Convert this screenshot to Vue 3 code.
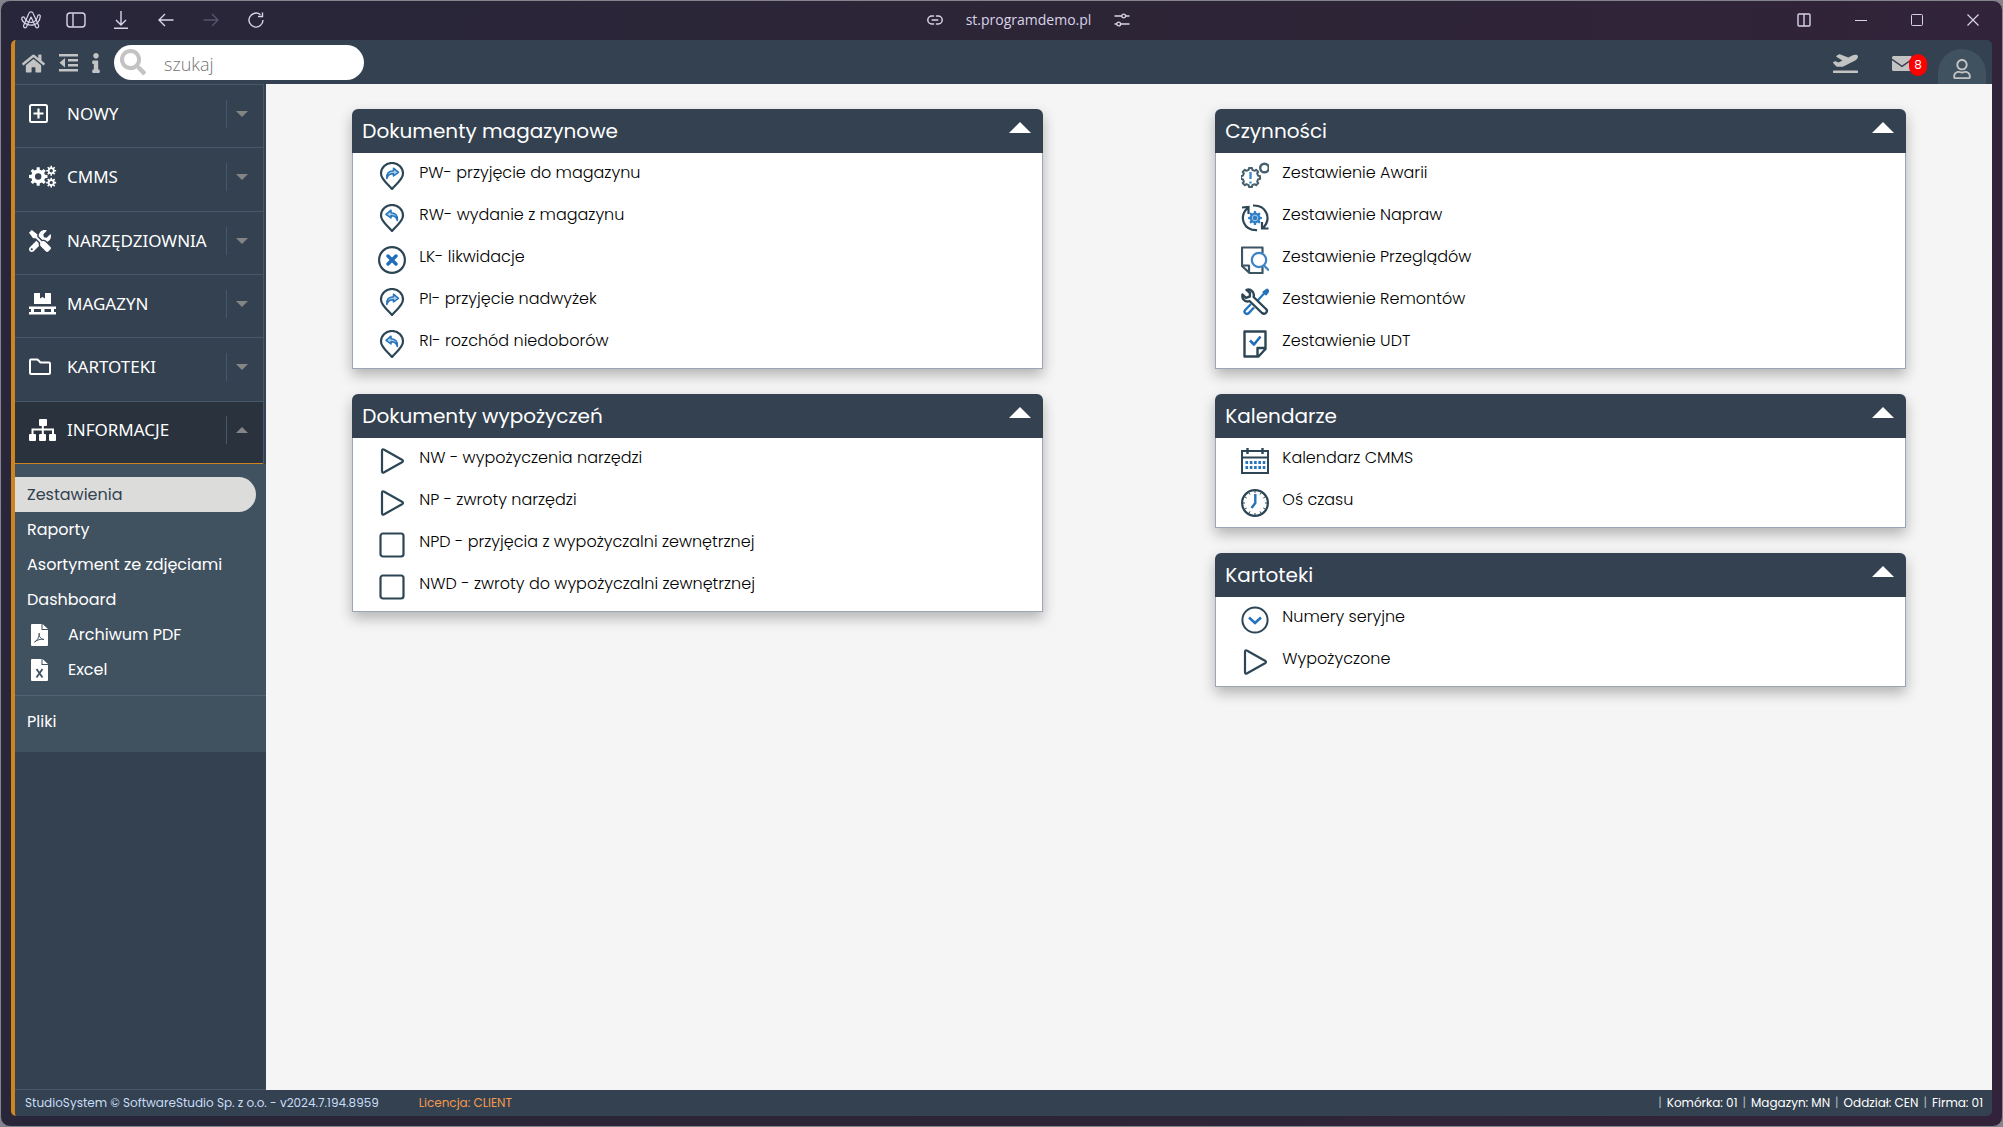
<script setup>
import { ref } from 'vue'

// Outline of a toothed wheel centred on (cx, cy).
function gear(cx, cy, inner, outer, teeth) {
  const points = []
  const step = (Math.PI * 2) / teeth
  for (let i = 0; i < teeth; i++) {
    const a = i * step
    for (const [r, k] of [[inner, -0.3], [outer, -0.2], [outer, 0.2], [inner, 0.3]]) {
      points.push(`${(cx + r * Math.cos(a + k * step)).toFixed(2)} ${(cy + r * Math.sin(a + k * step)).toFixed(2)}`)
    }
  }
  return `M${points.join('L')}Z`
}

const search = ref('')

const menu = [
  { label: 'NOWY', icon: 'plus-square' },
  { label: 'CMMS', icon: 'cogs' },
  { label: 'NARZĘDZIOWNIA', icon: 'tools' },
  { label: 'MAGAZYN', icon: 'pallet' },
  { label: 'KARTOTEKI', icon: 'folder' },
  { label: 'INFORMACJE', icon: 'sitemap', open: true },
]

const submenu = [
  { label: 'Zestawienia', active: true },
  { label: 'Raporty' },
  { label: 'Asortyment ze zdjęciami' },
  { label: 'Dashboard' },
  { label: 'Archiwum PDF', icon: 'file-pdf' },
  { label: 'Excel', icon: 'file-excel' },
]

const columns = [
  [
    {
      title: 'Dokumenty magazynowe',
      items: [
        { label: 'PW- przyjęcie do magazynu', icon: 'pin-in' },
        { label: 'RW- wydanie z magazynu', icon: 'pin-out' },
        { label: 'LK- likwidacje', icon: 'cross' },
        { label: 'PI- przyjęcie nadwyżek', icon: 'pin-in' },
        { label: 'RI- rozchód niedoborów', icon: 'pin-out' },
      ],
    },
    {
      title: 'Dokumenty wypożyczeń',
      items: [
        { label: 'NW - wypożyczenia narzędzi', icon: 'play' },
        { label: 'NP - zwroty narzędzi', icon: 'play' },
        { label: 'NPD - przyjęcia z wypożyczalni zewnętrznej', icon: 'square' },
        { label: 'NWD - zwroty do wypożyczalni zewnętrznej', icon: 'square' },
      ],
    },
  ],
  [
    {
      title: 'Czynności',
      items: [
        { label: 'Zestawienie Awarii', icon: 'failure' },
        { label: 'Zestawienie Napraw', icon: 'repair' },
        { label: 'Zestawienie Przeglądów', icon: 'review' },
        { label: 'Zestawienie Remontów', icon: 'overhaul' },
        { label: 'Zestawienie UDT', icon: 'report' },
      ],
    },
    {
      title: 'Kalendarze',
      items: [
        { label: 'Kalendarz CMMS', icon: 'calendar' },
        { label: 'Oś czasu', icon: 'clock' },
      ],
    },
    {
      title: 'Kartoteki',
      items: [
        { label: 'Numery seryjne', icon: 'chevron' },
        { label: 'Wypożyczone', icon: 'play' },
      ],
    },
  ],
]

const context = ['Komórka: 01', 'Magazyn: MN', 'Oddział: CEN', 'Firma: 01']
</script>

<template>
  <svg class="sprite" width="0" height="0" aria-hidden="true">
    <symbol id="arc" viewBox="0 0 20 18" fill="none" stroke="currentColor" stroke-width="1.2" stroke-linejoin="round" stroke-linecap="round">
      <path d="M7.800 2.400C8.600 .4 11.400 .4 12.200 2.400L17.600 14.600C18.200 16.800 15.400 17.600 14.600 15.800L10 6L5.600 15.800C4.800 17.600 2 16.600 2.600 14.600Z" />
      <path d="M.8 7C1.200 5.600 3 5.600 3.500 6.800C4.800 10.400 8.800 12.400 12.400 11C15.400 9.800 16.200 7.400 16.600 5C17 3.200 19.600 3.600 19.300 5.400C18.800 9.200 17 12.400 13.400 13.600C8 15.200 2.200 12.600 .8 8.200Z" />
    </symbol>
    <symbol id="panel" viewBox="0 0 20 16" fill="none" stroke="currentColor" stroke-width="1.4">
      <rect x="1" y="1" width="18" height="14" rx="3" /><path d="M7 1.500v13" />
    </symbol>
    <symbol id="download" viewBox="0 0 14 18" fill="none" stroke="currentColor" stroke-width="1.4">
      <path d="M7 0v14M2 9l5 5l5-5M0 17.200h14" />
    </symbol>
    <symbol id="back" viewBox="0 0 16 14" fill="none" stroke="currentColor" stroke-width="1.4">
      <path d="M15.500 7H1M7 1L1 7l6 6" />
    </symbol>
    <symbol id="forward" viewBox="0 0 16 14" fill="none" stroke="currentColor" stroke-width="1.4">
      <path d="M.5 7H15M9 1l6 6l-6 6" />
    </symbol>
    <symbol id="reload" viewBox="0 0 16 16" fill="none" stroke="currentColor" stroke-width="1.4">
      <path d="M15 8a7 7 0 1 1-2.500-5.300M14.500 .5v4h-4.500" />
    </symbol>
    <symbol id="link" viewBox="0 0 16 10" fill="none" stroke="currentColor" stroke-width="1.5" stroke-linecap="round">
      <path d="M6.500 1H4.800a4 4 0 0 0 0 8h1.700M9.500 1h1.700a4 4 0 0 1 0 8H9.500M5.200 5h5.600" />
    </symbol>
    <symbol id="sliders" viewBox="0 0 16 14" fill="none" stroke="currentColor" stroke-width="1.4" stroke-linecap="round">
      <path d="M1 3h6.500M12 3h3M1 11h1.500M7 11h8" /><circle cx="9.700" cy="3" r="1.900" /><circle cx="4.700" cy="11" r="1.900" />
    </symbol>
    <symbol id="split" viewBox="0 0 14 14" fill="none" stroke="currentColor" stroke-width="1.4">
      <rect x="1" y="1" width="12" height="12" rx="1" /><path d="M7 1v12" />
    </symbol>
    <symbol id="minimize" viewBox="0 0 12 12" stroke="currentColor"><path d="M0 6.500h12" /></symbol>
    <symbol id="maximize" viewBox="0 0 12 12" fill="none" stroke="currentColor"><rect x=".5" y=".5" width="11" height="11" rx="1" /></symbol>
    <symbol id="close" viewBox="0 0 12 12" stroke="currentColor" stroke-width="1.2"><path d="M.5 .5l11 11M11.500 .5l-11 11" /></symbol>

    <symbol id="home" viewBox="0 0 576 512" fill="currentColor">
      <path d="M280.37 148.26L96 300.11V464a16 16 0 0 0 16 16l112.06-.29a16 16 0 0 0 15.92-16V368a16 16 0 0 1 16-16h64a16 16 0 0 1 16 16v95.64a16 16 0 0 0 16 16.05L464 480a16 16 0 0 0 16-16V300L295.67 148.26a12.19 12.19 0 0 0-15.3 0zM571.6 251.47L488 182.56V44.05a12 12 0 0 0-12-12h-56a12 12 0 0 0-12 12v72.61L318.47 43a48 48 0 0 0-61 0L4.34 251.47a12 12 0 0 0-1.6 16.9l25.5 31A12 12 0 0 0 45.15 301l235.22-193.74a12.19 12.19 0 0 1 15.3 0L530.9 301a12 12 0 0 0 16.9-1.6l25.5-31a12 12 0 0 0-1.7-16.93z" />
    </symbol>
    <symbol id="outdent" viewBox="0 0 19 18" fill="currentColor">
      <path d="M0 0h19v2.500H0zM9 5h10v2.500H9zM9 10h10v2.500H9zM0 15h19v2.500H0zM6 4v9.500L.5 8.750z" />
    </symbol>
    <symbol id="info" viewBox="0 0 192 512" fill="currentColor">
      <path d="M20 424.229h20V279.771H20c-11.046 0-20-8.954-20-20V212c0-11.046 8.954-20 20-20h112c11.046 0 20 8.954 20 20v212.229h20c11.046 0 20 8.954 20 20V492c0 11.046-8.954 20-20 20H20c-11.046 0-20-8.954-20-20v-47.771c0-11.046 8.954-20 20-20zM96 0C56.235 0 24 32.235 24 72s32.235 72 72 72 72-32.235 72-72S135.764 0 96 0z" />
    </symbol>
    <symbol id="search" viewBox="0 0 512 512" fill="currentColor">
      <path d="M505 442.7L405.3 343c-4.5-4.5-10.6-7-17-7H372c27.6-35.3 44-79.7 44-128C416 93.1 322.9 0 208 0S0 93.1 0 208s93.1 208 208 208c48.3 0 92.7-16.4 128-44v16.3c0 6.4 2.5 12.5 7 17l99.7 99.7c9.4 9.4 24.6 9.4 33.9 0l28.3-28.3c9.4-9.4 9.4-24.6.1-34zM208 336c-70.7 0-128-57.2-128-128 0-70.7 57.2-128 128-128 70.7 0 128 57.2 128 128 0 70.7-57.2 128-128 128z" />
    </symbol>
    <symbol id="plane" viewBox="0 0 640 512" fill="currentColor">
      <path d="M624 448H16c-8.84 0-16 7.16-16 16v32c0 8.84 7.16 16 16 16h608c8.84 0 16-7.16 16-16v-32c0-8.84-7.16-16-16-16zM80.55 341.27c6.28 6.84 15.1 10.72 24.33 10.71l130.54-.18a65.62 65.62 0 0 0 29.64-7.12l290.96-147.65c26.74-13.57 50.71-32.94 67.02-58.31 18.31-28.48 20.3-49.09 13.07-63.65-7.21-14.57-24.74-25.27-58.25-27.45-29.85-1.94-59.54 5.92-86.28 19.48l-98.51 49.99-218.7-82.06a17.799 17.799 0 0 0-18-1.11L90.62 67.29c-10.67 5.41-13.25 19.65-5.17 28.53l156.22 98.1-103.21 52.38-72.35-36.47a17.804 17.804 0 0 0-16.07.02L9.91 230.22c-10.44 5.3-13.19 19.12-5.57 28.08l76.21 82.97z" />
    </symbol>
    <symbol id="envelope" viewBox="0 0 20 15" fill="currentColor">
      <path d="M0 1.500Q0 0 1.500 0h17Q20 0 20 1.500v1L10 9.500L0 2.500zM0 4.200L10 11.200l10-7v9.300Q20 15 18.500 15h-17Q0 15 0 13.500z" />
    </symbol>
    <symbol id="user" viewBox="0 0 448 512" fill="currentColor">
      <path d="M313.6 304c-28.7 0-42.5 16-89.6 16-47.1 0-60.8-16-89.6-16C60.2 304 0 364.2 0 438.4V464c0 26.5 21.5 48 48 48h352c26.5 0 48-21.5 48-48v-25.6c0-74.2-60.2-134.4-134.4-134.4zM400 464H48v-25.6c0-47.6 38.8-86.4 86.4-86.4 14.6 0 38.3 16 89.6 16 51.7 0 74.9-16 89.6-16 47.6 0 86.4 38.8 86.4 86.4V464zM224 288c79.5 0 144-64.5 144-144S303.500 0 224 0 80 64.500 80 144s64.500 144 144 144zm0-240c52.9 0 96 43.1 96 96s-43.1 96-96 96-96-43.1-96-96 43.1-96 96-96z" />
    </symbol>

    <symbol id="plus-square" viewBox="0 0 28 24">
      <rect x="1" y="3" width="17" height="17" rx="1.500" fill="none" stroke="currentColor" stroke-width="2" />
      <path d="M9.500 6.500v10M4.500 11.500h10" stroke="currentColor" stroke-width="2.2" />
    </symbol>
    <symbol id="cogs" viewBox="0 0 28 24" fill="currentColor" fill-rule="evenodd">
      <path :d="gear(9.2, 11.5, 7, 9.4, 8) + 'M12.400 11.500a3.200 3.200 0 1 0-6.400 0a3.200 3.200 0 1 0 6.400 0Z'" />
      <path :d="gear(22.2, 5.7, 3.5, 5, 8) + 'M23.900 5.700a1.700 1.700 0 1 0-3.400 0a1.700 1.700 0 1 0 3.400 0Z'" />
      <path :d="gear(22.2, 17.6, 3.5, 5, 8) + 'M23.900 17.600a1.700 1.700 0 1 0-3.400 0a1.700 1.700 0 1 0 3.400 0Z'" />
    </symbol>
    <symbol id="tools" viewBox="0 -24 652 559" fill="currentColor">
      <path d="M501.1 395.7L384 278.6c-23.1-23.1-57.6-27.6-85.4-13.9L192 158.1V96L64 0 0 64l96 128h62.1l106.6 106.6c-13.6 27.8-9.2 62.3 13.9 85.4l117.1 117.1c14.6 14.6 38.2 14.6 52.7 0l52.7-52.7c14.5-14.6 14.5-38.2 0-52.7zM331.7 225c28.3 0 54.9 11 74.9 31l19.4 19.4c15.8-6.9 30.8-16.5 43.8-29.5 37.1-37.1 49.7-89.3 37.9-136.7-2.2-9-13.5-12.1-20.1-5.5l-74.4 74.4-67.9-11.3L334 98.9l74.4-74.4c6.6-6.6 3.4-17.9-5.7-20.2-47.4-11.7-99.6.9-136.6 37.9-28.5 28.5-41.9 66.1-41.2 103.6l82.1 82.1c8.1-1.9 16.5-2.9 24.7-2.9zm-103.9 82l-56.7-56.7L18.7 402.8c-25 25-25 65.5 0 90.5s65.5 25 90.5 0l123.6-123.6c-7.6-19.9-9.9-41.6-5-62.7zM64 472c-13.2 0-24-10.8-24-24 0-13.3 10.7-24 24-24s24 10.7 24 24c0 13.2-10.7 24-24 24z" />
    </symbol>
    <symbol id="pallet" viewBox="0 0 28 24" fill="currentColor">
      <path d="M5 1.500Q5 1 5.500 1H11v5.500L13.500 5L16 6.500V1h5.200Q22 1 22 1.500V12H5z" />
      <path d="M0 14.500h27v2.500h-2v3h2v2.500H0V20h2v-3H0zM5 17v3h7v-3zM15.500 17v3h6.500v-3z" fill-rule="evenodd" />
    </symbol>
    <symbol id="folder" viewBox="0 0 28 24" fill="none" stroke="currentColor" stroke-width="2" stroke-linejoin="round">
      <path d="M1 5.500Q1 4.500 2 4.500H8.500L11.500 7.500H20Q21 7.500 21 8.500V18Q21 19 20 19H2Q1 19 1 18z" />
    </symbol>
    <symbol id="sitemap" viewBox="0 0 28 24" fill="currentColor">
      <rect x="10" y="1" width="8" height="7" rx="1" /><rect x="0" y="16" width="7" height="7" rx="1" /><rect x="10" y="16" width="7" height="7" rx="1" /><rect x="20" y="16" width="7" height="7" rx="1" />
      <path d="M3.500 16v-4.500h20.500V16M13.800 8v8" fill="none" stroke="currentColor" stroke-width="2" />
    </symbol>
    <symbol id="file-pdf" viewBox="0 0 17 22">
      <path d="M0 1Q0 0 1 0H10.500V6H17V21Q17 22 16 22H1Q0 22 0 21zM11.500 0L17 5H11.500z" fill="currentColor" />
      <path d="M3.500 18C5.500 17.500 9 12 8.200 9.200C7.500 11 9 15 13 15.500C10 14.500 6 16 3.500 18z" fill="none" stroke="#40515f" stroke-width="1" />
    </symbol>
    <symbol id="file-excel" viewBox="0 0 17 22">
      <path d="M0 1Q0 0 1 0H10.500V6H17V21Q17 22 16 22H1Q0 22 0 21zM11.500 0L17 5H11.500z" fill="currentColor" />
      <path d="M5.500 10l6 8.500M11.500 10l-6 8.500" stroke="#40515f" stroke-width="1.8" />
    </symbol>

    <symbol id="pin-in" viewBox="0 0 28 28" fill="none" stroke-linejoin="round">
      <path d="M14 27C10 22 3 17.500 3 11.500a11 10.500 0 0 1 22 0C25 17.500 18 22 14 27z" stroke="#2c4656" stroke-width="2.2" />
      <path d="M8.800 16.500C8.300 11.500 10.500 9 15.500 8.700V6.200L20.500 10.300L15.500 14V11.700C11.800 11.500 9.800 13 8.800 16.500z" fill="#a9cbe8" stroke="#2474bd" stroke-width="1.500" />
    </symbol>
    <symbol id="pin-out" viewBox="0 0 28 28" fill="none" stroke-linejoin="round">
      <path d="M14 27C10 22 3 17.500 3 11.500a11 10.500 0 0 1 22 0C25 17.500 18 22 14 27z" stroke="#2c4656" stroke-width="2.2" />
      <path d="M19.400 16.500C19.900 11.500 17.500 9 13 8.700V6.200L8 10.300L13 14V11.700C16.200 11.500 18.400 13 19.400 16.500z" fill="#a9cbe8" stroke="#2474bd" stroke-width="1.500" />
    </symbol>
    <symbol id="cross" viewBox="0 0 28 28" fill="none">
      <circle cx="14" cy="14" r="12.900" stroke="#2c4656" stroke-width="2.200" />
      <path d="M10 10l8 8M18 10l-8 8" stroke="#1f6db8" stroke-width="3.400" stroke-linecap="round" />
    </symbol>
    <symbol id="play" viewBox="0 0 28 28" fill="none">
      <path d="M4 4Q4 1.500 6.200 2.700L24 12.800Q26 14 24 15.200L6.200 25.300Q4 26.500 4 24z" stroke="#2c4656" stroke-width="2.200" />
    </symbol>
    <symbol id="square" viewBox="0 0 28 28" fill="none">
      <rect x="2.500" y="2.500" width="23" height="23" rx="2.500" stroke="#2c4656" stroke-width="2.200" />
    </symbol>
    <symbol id="failure" viewBox="0 0 28 28" fill="none" overflow="visible">
      <path :d="gear(9.5, 15.5, 7.8, 9.6, 8)" stroke="#455f6c" stroke-width="2" stroke-linejoin="round" />
      <circle cx="23.500" cy="6" r="4.300" stroke="#455f6c" stroke-width="2.400" />
      <path d="M9.500 10v7M9.500 19.500v2" stroke="#3d8ccf" stroke-width="2.400" />
    </symbol>
    <symbol id="repair" viewBox="0 0 28 28" fill="none">
      <path d="M6.500 4C-2.500 13 2.500 26.500 16 26.200M1 3.500l6.500-.5v7M12 1.500C25.500 1 31 14.500 22 24M27.500 24.500H21V18" stroke="#2c4656" stroke-width="2.200" />
      <path :d="gear(14, 14, 5.4, 7, 8)" fill="#2f7fc6" /><circle cx="14" cy="14" r="2.800" stroke="#a9cbe8" stroke-width="1" />
    </symbol>
    <symbol id="review" viewBox="0 0 28 28" fill="none" stroke-linejoin="round">
      <path d="M21.500 7V1.500H1V20L8.500 27H21.500V21M1 19.500H8V27" stroke="#3b5563" stroke-width="2.200" />
      <circle cx="18" cy="14" r="7.200" fill="#fff" stroke="#3a83c6" stroke-width="2.200" />
      <path d="M23 19.500l5 5" stroke="#3a83c6" stroke-width="2.200" />
    </symbol>
    <symbol id="overhaul" viewBox="0 0 28 28" fill="none" stroke-linejoin="round">
      <path d="M22.500 4l3.500-2.500l1.500 1.500L25 6.500z" fill="#2474bd" stroke="#2474bd" stroke-width="2" />
      <path d="M23.500 5L14 15.500" stroke="#2474bd" stroke-width="2.200" />
      <path d="M10 16L4.200 22c-2 2.500 1 5 3.300 3.300L13 19.500" stroke="#2474bd" stroke-width="2.400" />
      <path d="M5.500 1.800C9.500 .5 14 4 12.600 9L25.500 21.500C27 24.500 23.500 27 21 25L8.500 13C4.500 14.500 .5 11.500 1.500 6.500L5 9.800L8.800 8.500L9 5z" fill="#fff" stroke="#2c4656" stroke-width="2.400" />
    </symbol>
    <symbol id="report" viewBox="0 0 28 28" fill="none" stroke-linejoin="round">
      <path d="M3.500 1.500h21V19L17.500 26.500H3.500zM24.500 18H16.500V26.500" stroke="#2c4656" stroke-width="2.400" />
      <path d="M9 10.500l4 4L19.500 6.500" stroke="#1f6db8" stroke-width="2.600" />
    </symbol>
    <symbol id="calendar" viewBox="0 0 28 28" fill="none">
      <path d="M1 4h26v22H1zM1 10.500h26" stroke="#2c4656" stroke-width="2" /><path d="M6.500 1v6M21.500 1v6" stroke="#2c4656" stroke-width="2.400" />
      <path d="M4.500 15.500h20M4.500 20.500h20" stroke="#2474bd" stroke-width="3" stroke-dasharray="2.600 1.700" />
    </symbol>
    <symbol id="clock" viewBox="0 0 28 28" fill="none">
      <circle cx="14" cy="14" r="12.900" stroke="#2c4656" stroke-width="2.200" />
      <path d="M14 2v2M14 24v2M2 14h2M24 14h2M20 4l-1 1.600M24 8l-1.700 1M24 20l-1.700-1M20 24l-1-1.600M8 24l1-1.600M4 20l1.700-1M4 8l1.700 1M8 4l1 1.600" stroke="#2c4656" />
      <path d="M14.300 5v9L10.500 19" stroke="#2474bd" stroke-width="2.400" />
    </symbol>
    <symbol id="chevron" viewBox="0 0 28 28" fill="none">
      <circle cx="14" cy="14" r="12.600" stroke="#2c4656" stroke-width="2" />
      <path d="M8 11.500l6 5.500l6-5.500" stroke="#2474bd" stroke-width="2.600" />
    </symbol>
  </svg>

  <div class="window">
    <header class="titlebar">
      <div class="browser-nav">
        <button type="button" aria-label="Menu"><svg width="20" height="18"><use href="#arc" /></svg></button>
        <button type="button" aria-label="Panel boczny"><svg width="20" height="16"><use href="#panel" /></svg></button>
        <button type="button" aria-label="Pobrane"><svg width="14" height="18"><use href="#download" /></svg></button>
        <button type="button" aria-label="Wstecz"><svg width="16" height="14"><use href="#back" /></svg></button>
        <button type="button" aria-label="Dalej" disabled><svg width="16" height="14"><use href="#forward" /></svg></button>
        <button type="button" aria-label="Odśwież"><svg width="16" height="16"><use href="#reload" /></svg></button>
      </div>
      <div class="address">
        <svg width="16" height="10"><use href="#link" /></svg>
        <span>st.programdemo.pl</span>
        <svg width="16" height="14"><use href="#sliders" /></svg>
      </div>
      <div class="window-controls">
        <button type="button" aria-label="Podziel widok"><svg width="14" height="14"><use href="#split" /></svg></button>
        <button type="button" aria-label="Minimalizuj"><svg width="12" height="12"><use href="#minimize" /></svg></button>
        <button type="button" aria-label="Maksymalizuj"><svg width="12" height="12"><use href="#maximize" /></svg></button>
        <button type="button" aria-label="Zamknij"><svg width="12" height="12"><use href="#close" /></svg></button>
      </div>
    </header>

    <div class="app">
      <div class="topbar">
        <a href="#" class="tool" aria-label="Start"><svg width="23" height="21"><use href="#home" /></svg></a>
        <button type="button" class="tool" aria-label="Zwiń menu"><svg width="19" height="18"><use href="#outdent" /></svg></button>
        <button type="button" class="tool" aria-label="Informacje"><svg width="8" height="20"><use href="#info" /></svg></button>
        <label class="search">
          <svg width="26" height="26" aria-hidden="true"><use href="#search" /></svg>
          <input v-model="search" type="search" placeholder="szukaj" aria-label="szukaj" />
        </label>
        <div class="account">
          <button type="button" class="tool" aria-label="Wyjazdy"><svg width="25" height="20"><use href="#plane" /></svg></button>
          <button type="button" class="tool mail" aria-label="Wiadomości">
            <svg width="20" height="15"><use href="#envelope" /></svg>
            <span class="badge">8</span>
          </button>
          <button type="button" class="avatar" aria-label="Konto"><svg width="18" height="20"><use href="#user" /></svg></button>
        </div>
      </div>

      <div class="body">
        <nav class="sidebar">
          <div class="menu">
            <button v-for="item in menu" :key="item.label" type="button" class="menu-item" :class="{ open: item.open }">
              <svg width="28" height="24"><use :href="'#' + item.icon" /></svg>
              <span class="menu-label">{{ item.label }}</span>
              <span class="toggle"><i class="caret"></i></span>
            </button>
          </div>
          <div class="submenu">
            <a v-for="item in submenu" :key="item.label" href="#" class="sub-item" :class="{ active: item.active }">
              <svg v-if="item.icon" width="17" height="22"><use :href="'#' + item.icon" /></svg>
              {{ item.label }}
            </a>
            <hr />
            <a href="#" class="sub-item">Pliki</a>
          </div>
        </nav>

        <main class="content">
          <div v-for="(cards, i) in columns" :key="i" class="column">
            <section v-for="card in cards" :key="card.title" class="card">
              <button type="button" class="card-head">
                {{ card.title }}
                <i class="fold"></i>
              </button>
              <ul>
                <li v-for="item in card.items" :key="item.label">
                  <a href="#">
                    <svg width="28" height="28"><use :href="'#' + item.icon" /></svg>
                    <span>{{ item.label }}</span>
                  </a>
                </li>
              </ul>
            </section>
          </div>
        </main>
      </div>

      <footer class="statusbar">
        <span>StudioSystem © SoftwareStudio Sp. z o.o. - v2024.7.194.8959</span>
        <span class="license">Licencja: CLIENT</span>
        <span class="context">
          <span v-for="entry in context" :key="entry"><i>|</i>{{ entry }}</span>
        </span>
      </footer>
    </div>
  </div>
</template>

<style>
html {
  background: #85838b;
}
body {
  margin: 0;
}
</style>

<style scoped>
* {
  box-sizing: border-box;
}
button {
  padding: 0;
  border: 0;
  background: none;
  color: inherit;
  font: inherit;
}
svg {
  display: block;
  flex: none;
}
a {
  color: inherit;
  text-decoration: none;
}
.sprite {
  position: absolute;
}
.window {
  display: flex;
  flex-direction: column;
  min-height: 100vh;
  padding: 0 10px 10px;
  border: 1px solid #85838b;
  border-radius: 10px;
  background: linear-gradient(100deg, #28263a, #2c2536 50%, #33233a);
  font-family: Poppins, Inter, sans-serif;
}
.titlebar {
  display: grid;
  grid-template-columns: 1fr auto 1fr;
  align-items: center;
  height: 39px;
  padding-bottom: 2px;
  color: #d9d3e8;
}
.browser-nav,
.window-controls,
.address {
  display: flex;
  align-items: center;
}
.browser-nav {
  gap: 25px;
  padding-left: 10px;
}
.browser-nav button {
  display: flex;
  justify-content: center;
  width: 20px;
}
.browser-nav button:disabled {
  color: #57536a;
}
.address {
  gap: 23px;
  padding-left: 54px;
  font: 14px/20px "Open Sans", sans-serif;
}
.window-controls {
  justify-content: flex-end;
  gap: 44px;
  padding-right: 13px;
}
.app {
  display: flex;
  flex: 1;
  flex-direction: column;
  overflow: hidden;
  border-left: 4px solid #ce8520;
  border-radius: 5px;
  background: #334150;
}
.topbar {
  display: flex;
  align-items: center;
  gap: 14px;
  height: 44px;
  padding-left: 7px;
  color: #c3c3c3;
}
.tool {
  padding-top: 2px;
}
.search {
  display: flex;
  align-items: center;
  gap: 18px;
  width: 250px;
  height: 35px;
  padding: 0 6px;
  border-radius: 18px;
  background: #fff;
}
.search input {
  width: 180px;
  padding: 3px 0 0;
  border: 0;
  outline: 0;
  background: none;
  color: #555;
  font: 300 18px/28px "Open Sans", sans-serif;
}
.search input::placeholder {
  color: #757575;
}
.account {
  display: flex;
  align-items: center;
  align-self: stretch;
  margin-left: auto;
  padding-right: 6px;
}
.mail {
  position: relative;
  margin: 0 26px 0 34px;
}
.badge {
  position: absolute;
  top: 0;
  left: 17px;
  width: 18px;
  height: 22px;
  border-radius: 9px;
  background: #f00;
  color: #fff;
  font-size: 12px;
  line-height: 22px;
  text-align: center;
}
.avatar {
  display: flex;
  align-self: flex-start;
  justify-content: center;
  width: 48px;
  height: 35px;
  margin-top: 9px;
  padding-top: 10px;
  border-radius: 24px 24px 0 0;
  background: #40515f;
}
.body {
  display: flex;
  flex: 1;
}
.sidebar {
  width: 251px;
  border-bottom: 1px solid #46586a;
}
.menu {
  display: grid;
  grid-auto-rows: 1fr;
  height: 380px;
  margin-right: 2px;
  border-right: 1px solid #46586a;
}
.menu-item {
  display: flex;
  align-items: center;
  padding: 0 15px 4px 14px;
  border-top: 1px solid #46586a;
  color: #fff;
  font: 17px/24px "Noto Sans", sans-serif;
  text-align: left;
}
.menu-item.open {
  border-bottom: 1px solid #ce8520;
  background: #29323d;
}
.menu-label {
  flex: 1;
  margin-left: 10px;
}
.toggle {
  display: flex;
  align-items: center;
  height: 28px;
  padding-left: 9px;
  border-left: 1px solid #46586a;
}
.caret {
  border: 6px solid transparent;
  border-top-color: #858585;
  border-bottom-width: 0;
}
.open .caret {
  border-width: 0 6px 6px;
  border-bottom-color: #858585;
}
.submenu {
  padding: 13px 0;
  background: #40515f;
}
.sub-item {
  display: flex;
  align-items: center;
  gap: 20px;
  height: 35px;
  margin-right: 10px;
  padding-left: 12px;
  color: #fff;
  font-size: 16px;
  line-height: 24px;
}
.sub-item svg {
  margin-left: 4px;
}
.sub-item.active {
  border-radius: 0 18px 18px 0;
  background: #dcdddb;
  color: #334150;
}
.submenu hr {
  margin: 8px 0;
  border: 0;
  border-top: 1px solid #526474;
}
.content {
  display: flex;
  flex: 1;
  align-items: flex-start;
  justify-content: space-around;
  padding: 25px 0;
  background: #f5f5f5;
}
.column {
  display: flex;
  flex-direction: column;
  gap: 25px;
  width: 40%;
}
.card {
  border-radius: 6px 6px 0 0;
  background: #fff;
  box-shadow: 0 6px 14px rgb(0 0 0 / 28%);
}
.card-head {
  display: flex;
  justify-content: space-between;
  width: 100%;
  height: 44px;
  padding: 0 12px 0 10px;
  border-radius: 6px 6px 0 0;
  background: #334150;
  color: #fff;
  font-size: 20px;
  line-height: 44px;
}
.fold {
  margin-top: 13px;
  border: solid transparent;
  border-width: 0 11px 11px;
  border-bottom-color: #fff;
  align-self: flex-start;
}
.card ul {
  margin: 0;
  padding: 0 0 5px 25px;
  border: 1px solid #9aa5b5;
  border-top: 0;
  list-style: none;
}
.card a {
  display: flex;
  gap: 13px;
  height: 42px;
  padding-top: 9px;
  color: #000;
  font-size: 16px;
  font-weight: 300;
  line-height: 22px;
}
.statusbar {
  display: flex;
  align-items: center;
  height: 26px;
  padding: 0 9px 0 10px;
  color: #c8dcf5;
  font-size: 12px;
  line-height: 20px;
}
.license {
  margin-left: 40px;
  color: #f39a4f;
}
.context {
  display: flex;
  gap: 5px;
  margin-left: auto;
  color: #fff;
}
.context i {
  margin-right: 5px;
  color: #a9b3bd;
  font-style: normal;
}
</style>
